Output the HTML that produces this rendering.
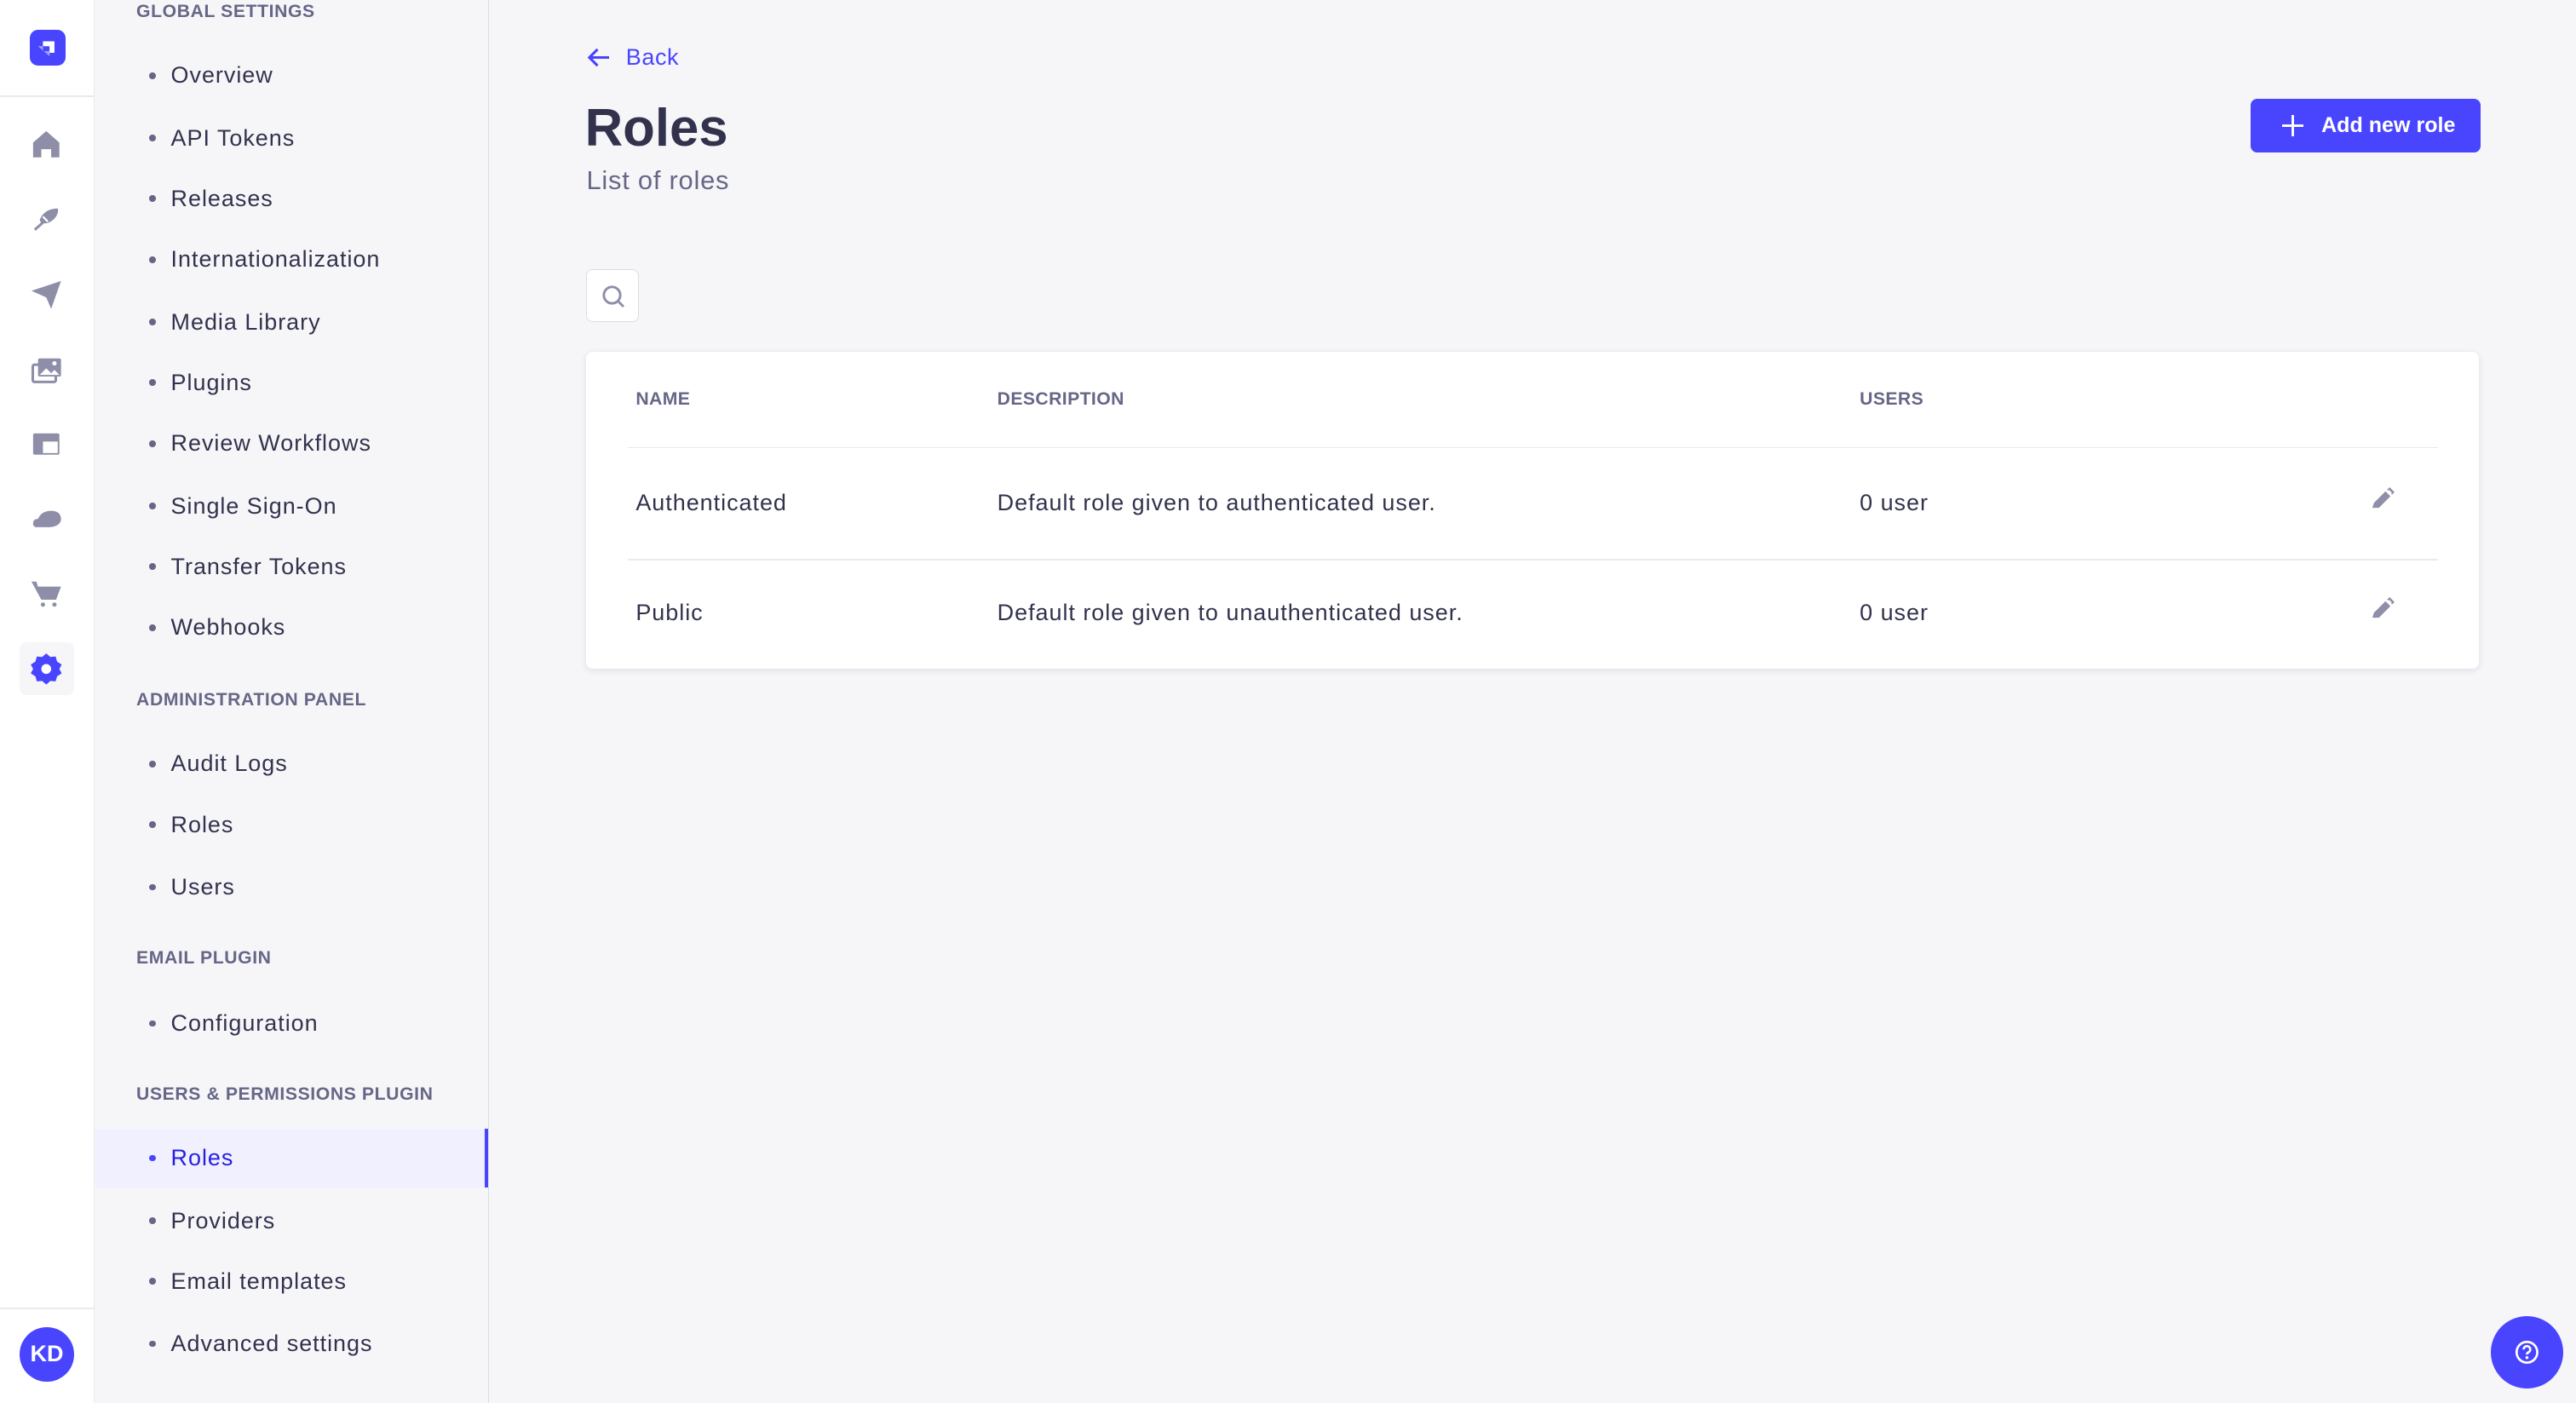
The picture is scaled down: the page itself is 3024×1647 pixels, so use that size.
<!DOCTYPE html>
<html><head><meta charset="utf-8"><style>
html,body{margin:0;padding:0;}
body{width:1568px;height:853.5px;overflow:hidden;zoom:1.92857;background:#f6f6f9;font-family:"Liberation Sans",sans-serif;position:relative;color:#32324d;}
.abs{position:absolute;}
#nav{left:0;top:0;width:57px;height:854px;background:#fff;border-right:1px solid #eaeaef;}
#sub{left:58px;top:0;width:239px;height:854px;background:#f6f6f9;border-right:1px solid #dcdce4;}
.h{position:absolute;left:25px;font-size:11px;font-weight:bold;color:#666687;letter-spacing:.3px;line-height:14px;}
.it{position:absolute;left:0;width:239px;height:20px;line-height:20px;font-size:14px;color:#32324d;letter-spacing:.5px;}
.it span.d{position:absolute;left:33px;top:8px;width:4px;height:4px;border-radius:50%;background:#666687;}
.it span.t{position:absolute;left:46px;}
.ic{position:absolute;left:18px;width:20px;height:20px;}
.th{position:absolute;font-size:11px;font-weight:bold;color:#666687;top:237px;letter-spacing:.2px;}
.td{position:absolute;font-size:14px;color:#32324d;letter-spacing:.5px;}
</style></head><body>
<div id="nav" class="abs">
  <div class="abs" style="left:18px;top:18px;width:22px;height:22px;background:#4945ff;border-radius:5px;">
    <svg width="22" height="22" viewBox="0 0 22 22"><path d="M8 7h7v7h-3v-4H8z" fill="#fff"/><path d="M5 10h3v3h4v3z" fill="#a5a3ff"/></svg>
  </div>
  <div class="abs" style="left:0;top:58px;width:57px;height:1px;background:#eaeaef"></div>
  <svg class="ic" style="top:78px" viewBox="0 0 20 20"><path d="M10 2l8 7v9h-5v-5H7v5H2V9z" fill="#8e8ea9"/></svg>
  <svg class="ic" style="top:123px" viewBox="0 0 20 20"><path d="M6 11c2-5 6-7 11-7 1 3-2 8-7 9H7z" fill="#8e8ea9"/><path d="M3 17l9-8" stroke="#8e8ea9" stroke-width="1.6"/><path d="M8 9l3 3" stroke="#fff" stroke-width="1.2"/></svg>
  <svg class="ic" style="top:169px" viewBox="0 0 20 20"><path d="M1 8l18-6-6 17-3-7z" fill="#8e8ea9"/></svg>
  <svg class="ic" style="top:215px" viewBox="0 0 20 20"><rect x="5" y="3" width="14" height="11" rx="1" fill="#8e8ea9"/><rect x="1.8" y="6.8" width="14" height="10.5" rx="1" fill="none" stroke="#8e8ea9" stroke-width="1.6"/><path d="M6 13l4-4 3 3 2-2 3 3z" fill="#fff"/><circle cx="15" cy="6" r="1.3" fill="#fff"/></svg>
  <svg class="ic" style="top:260px" viewBox="0 0 20 20"><rect x="2" y="4" width="16" height="13" rx="1" fill="#8e8ea9"/><rect x="8" y="9" width="9" height="7" fill="#fff"/></svg>
  <svg class="ic" style="top:306px" viewBox="0 0 20 20"><path d="M2 13c0-3 2-3 3-3 1-3 4-5 8-5s6 2 6 5-3 5-8 5H4c-1 0-2-1-2-2z" fill="#8e8ea9"/></svg>
  <svg class="ic" style="top:351px" viewBox="0 0 20 20"><path d="M1 3h3l1 3h14l-3 8H7z" fill="#8e8ea9"/><circle cx="8" cy="17" r="1.3" fill="#8e8ea9"/><circle cx="15" cy="17" r="1.3" fill="#8e8ea9"/></svg>
  <div class="abs" style="left:12px;top:391px;width:33px;height:32px;background:#f6f6f9;border-radius:4px"></div>
  <svg class="ic" style="top:397px" viewBox="0 0 20 20"><path d="M10 1.5l2.5 2.2 3.2-.3.9 3.1 2.8 1.8-1.4 2.7 1.4 2.7-2.8 1.8-.9 3.1-3.2-.3L10 20.5 7.5 18.3l-3.2.3-.9-3.1L.6 13.7 2 11 .6 8.3l2.8-1.8.9-3.1 3.2.3z" transform="translate(0 -1)" fill="#4945ff"/><circle cx="10" cy="10" r="3" fill="#fff"/></svg>
  <div class="abs" style="left:0;top:796px;width:57px;height:1px;background:#eaeaef"></div>
  <div class="abs" style="left:12px;top:808px;width:33px;height:33px;border-radius:50%;background:#4945ff;color:#fff;font-size:14px;font-weight:bold;text-align:center;line-height:33px;">KD</div>
</div>
<div id="sub" class="abs">
  <div class="h" style="top:0">GLOBAL SETTINGS</div>
  <div class="it" style="top:36px"><span class="d"></span><span class="t">Overview</span></div>
  <div class="it" style="top:74px"><span class="d"></span><span class="t">API Tokens</span></div>
  <div class="it" style="top:111px"><span class="d"></span><span class="t">Releases</span></div>
  <div class="it" style="top:148px"><span class="d"></span><span class="t">Internationalization</span></div>
  <div class="it" style="top:186px"><span class="d"></span><span class="t">Media Library</span></div>
  <div class="it" style="top:223px"><span class="d"></span><span class="t">Plugins</span></div>
  <div class="it" style="top:260px"><span class="d"></span><span class="t">Review Workflows</span></div>
  <div class="it" style="top:298px"><span class="d"></span><span class="t">Single Sign-On</span></div>
  <div class="it" style="top:335px"><span class="d"></span><span class="t">Transfer Tokens</span></div>
  <div class="it" style="top:372px"><span class="d"></span><span class="t">Webhooks</span></div>
  <div class="h" style="top:419px">ADMINISTRATION PANEL</div>
  <div class="it" style="top:455px"><span class="d"></span><span class="t">Audit Logs</span></div>
  <div class="it" style="top:492px"><span class="d"></span><span class="t">Roles</span></div>
  <div class="it" style="top:530px"><span class="d"></span><span class="t">Users</span></div>
  <div class="h" style="top:576px">EMAIL PLUGIN</div>
  <div class="it" style="top:613px"><span class="d"></span><span class="t">Configuration</span></div>
  <div class="h" style="top:659px">USERS &amp; PERMISSIONS PLUGIN</div>
  <div class="abs" style="left:0;top:687px;width:239px;height:36px;background:#f0f0ff;"></div>
  <div class="abs" style="left:237px;top:687px;width:2px;height:36px;background:#4945ff;"></div>
  <div class="it" style="top:695px;color:#271fe0"><span class="d" style="background:#4945ff"></span><span class="t">Roles</span></div>
  <div class="it" style="top:733px"><span class="d"></span><span class="t">Providers</span></div>
  <div class="it" style="top:770px"><span class="d"></span><span class="t">Email templates</span></div>
  <div class="it" style="top:808px"><span class="d"></span><span class="t">Advanced settings</span></div>
</div>
<svg class="abs" style="left:357px;top:28px" width="16" height="14" viewBox="0 0 16 14"><path d="M14 7H2M7 2L2 7l5 5" stroke="#4945ff" stroke-width="1.6" fill="none"/></svg>
<div class="abs" style="left:381px;top:26px;font-size:14px;color:#4945ff;line-height:18px;letter-spacing:.3px">Back</div>
<div class="abs" style="left:356px;top:59px;font-size:32px;font-weight:bold;color:#32324d;line-height:38px">Roles</div>
<div class="abs" style="left:357px;top:100px;font-size:16px;color:#666687;line-height:20px;letter-spacing:.4px">List of roles</div>
<div class="abs" style="left:1370px;top:60px;width:140px;height:33px;background:#4945ff;border-radius:4px;color:#fff;font-size:13px;font-weight:bold;line-height:33px;">
  <svg class="abs" style="left:19px;top:10px" width="13" height="13" viewBox="0 0 13 13"><path d="M6.5 0v13M0 6.5h13" stroke="#fff" stroke-width="1.5"/></svg>
  <span class="abs" style="left:43px">Add new role</span>
</div>
<div class="abs" style="left:357px;top:164px;width:31px;height:31px;background:#fff;border:1px solid #dcdce4;border-radius:4px;">
  <svg class="abs" style="left:8px;top:8px" width="16" height="16" viewBox="0 0 16 16"><circle cx="7" cy="7" r="5" stroke="#8e8ea9" stroke-width="1.5" fill="none"/><path d="M10.5 10.5l3.5 3.5" stroke="#8e8ea9" stroke-width="1.5"/></svg>
</div>
<div class="abs" style="left:357px;top:214px;width:1152px;height:193px;background:#fff;border-radius:4px;box-shadow:0 1px 4px rgba(33,33,52,.1);"></div>
<div class="th" style="left:387px">NAME</div>
<div class="th" style="left:607px">DESCRIPTION</div>
<div class="th" style="left:1132px">USERS</div>
<div class="abs" style="left:382px;top:272px;width:1102px;height:1px;background:#eaeaef"></div>
<div class="abs" style="left:382px;top:340px;width:1102px;height:1px;background:#eaeaef"></div>
<div class="td" style="left:387px;top:298px">Authenticated</div>
<div class="td" style="left:607px;top:298px">Default role given to authenticated user.</div>
<div class="td" style="left:1132px;top:298px">0 user</div>
<div class="td" style="left:387px;top:365px">Public</div>
<div class="td" style="left:607px;top:365px">Default role given to unauthenticated user.</div>
<div class="td" style="left:1132px;top:365px">0 user</div>
<svg class="abs" style="left:1443px;top:296px" width="15" height="15" viewBox="0 0 15 15"><path d="M1 13l1-3 7-7 3 3-7 7z" fill="#8e8ea9"/><path d="M10 2l1.5-1.5 3 3L13 5z" fill="#8e8ea9"/><path d="M9.8 3.2l1.3-1.1 1.8 1.8-1.1 1.3z" fill="#fff"/></svg>
<svg class="abs" style="left:1443px;top:363px" width="15" height="15" viewBox="0 0 15 15"><path d="M1 13l1-3 7-7 3 3-7 7z" fill="#8e8ea9"/><path d="M10 2l1.5-1.5 3 3L13 5z" fill="#8e8ea9"/><path d="M9.8 3.2l1.3-1.1 1.8 1.8-1.1 1.3z" fill="#fff"/></svg>
<div class="abs" style="left:1516px;top:801px;width:44px;height:44px;border-radius:50%;background:#4945ff;">
  <svg class="abs" style="left:14px;top:14px" width="16" height="16" viewBox="0 0 16 16"><circle cx="8" cy="8" r="6.3" stroke="#fff" stroke-width="1.4" fill="none"/><path d="M6 6.3a2 2 0 1 1 2.8 1.8c-.6.3-.8.6-.8 1.3" stroke="#fff" stroke-width="1.4" fill="none"/><circle cx="8" cy="11.3" r=".9" fill="#fff"/></svg>
</div>
</body></html>
